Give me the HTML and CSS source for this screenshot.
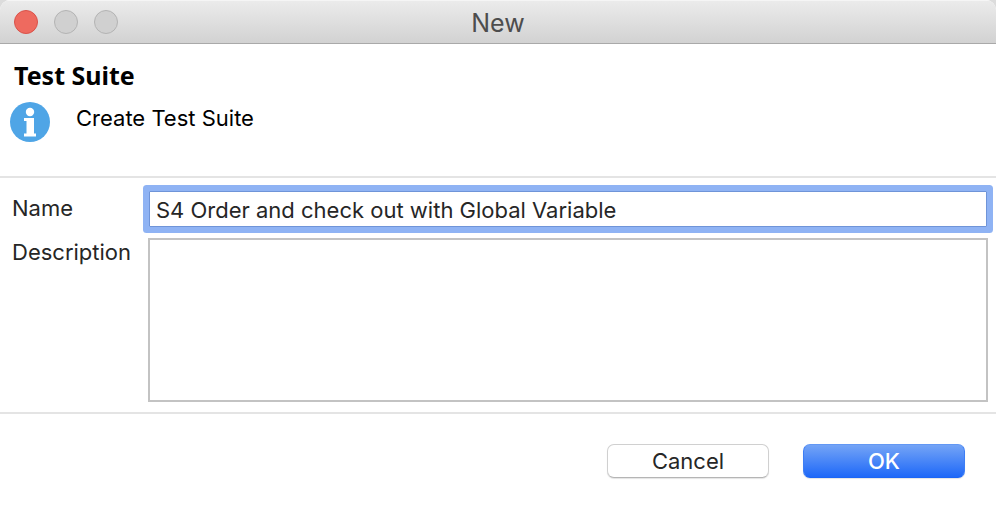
FILE: index.html
```html
<!DOCTYPE html>
<html lang="en">
<head>
<meta charset="utf-8">
<title>New</title>
<link rel="stylesheet" href="styles.css">
</head>
<body>
<form class="dialog">
  <header class="titlebar">
    <div class="controls">
      <button type="button" class="control close" aria-label="Close"></button>
      <button type="button" class="control" aria-label="Minimize" disabled></button>
      <button type="button" class="control" aria-label="Zoom" disabled></button>
    </div>
    <div class="caption">New</div>
  </header>
  <section class="banner">
    <h1 class="heading">Test Suite</h1>
    <div class="message">
      <svg class="info" viewBox="0 0 40 40" aria-hidden="true">
        <circle cx="20" cy="20" r="20" fill="#4fa5e6"/>
        <circle cx="20" cy="10" r="4.200" fill="#fff"/>
        <path d="M14 16h10v15.500h2v3H14v-3h2.500v-12.500H14z" fill="#fff"/>
      </svg>
      <p class="text">Create Test Suite</p>
    </div>
  </section>
  <section class="fields">
    <label class="label" for="name">Name</label>
    <input id="name" class="name" type="text" value="S4 Order and check out with Global Variable">
    <label class="label-top" for="description">Description</label>
    <textarea id="description" class="description"></textarea>
  </section>
  <footer class="actions">
    <button type="button" class="button">Cancel</button>
    <button type="submit" class="button primary">OK</button>
  </footer>
</form>
</body>
</html>
```
FILE: styles.css
```css
* {
  box-sizing: border-box;
}

html,
body {
  height: 100%;
  margin: 0;
}

body {
  background: #dcdcdc;
  color: #262626;
  font: 22px/28px Inter, "Liberation Sans", sans-serif;
}

.dialog {
  display: flex;
  flex-direction: column;
  min-height: 100%;
  overflow: hidden;
  border-radius: 10px 10px 0 0;
  background: #fff;
}

.titlebar {
  display: grid;
  grid-template-columns: 1fr auto 1fr;
  align-items: center;
  height: 44px;
  padding: 0 14px;
  border-top: 1px solid #f5f5f5;
  border-bottom: 1px solid #a9a9a9;
  background: linear-gradient(#ebebeb, #d2d2d2);
}

.controls {
  display: flex;
  gap: 16px;
}

.control {
  width: 24px;
  height: 24px;
  padding: 0;
  border: 1px solid #b3b3b3;
  border-radius: 50%;
  background: #d0d0d0;
}

.close {
  border-color: #d9524a;
  background: #ee6a5f;
}

.caption {
  padding-top: 2px;
  color: #4d4d4d;
  font-size: 25px;
}

.banner {
  height: 134px;
  padding: 15px 10px;
  border-bottom: 2px solid #e4e4e4;
  color: #000;
}

.heading {
  margin: 0 4px;
  font: bold 25px/32px "Noto Sans", sans-serif;
}

.message {
  display: flex;
  gap: 26px;
  margin-top: 11px;
}

.info {
  width: 40px;
  height: 40px;
}

.text {
  margin: 2px 0;
}

.fields {
  display: grid;
  flex: 1;
  grid-template-columns: 124px 1fr;
  grid-template-rows: auto 1fr;
  gap: 11px 12px;
  padding: 13px 8px 10px 12px;
}

.label {
  padding-top: 3px;
}

.name,
.description {
  width: 100%;
  margin: 0;
  border-radius: 0;
  outline: 0;
  background: #fff;
  color: inherit;
  font: inherit;
}

.name {
  justify-self: center;
  width: calc(100% - 2px);
  height: 36px;
  padding: 2px 6px 0;
  border: 1px solid #6f94d8;
  border-radius: 1px;
  box-shadow: 0 0 0 6px #8fb3f4;
}

.description {
  display: block;
  border: 2px solid #c3c3c3;
  resize: none;
}

.actions {
  display: flex;
  justify-content: flex-end;
  gap: 34px;
  height: 100px;
  padding: 30px 31px;
  border-top: 2px solid #e4e4e4;
}

.button {
  width: 162px;
  height: 34px;
  padding: 0;
  border: 1px solid #d0d0d0;
  border-bottom-color: #b5b5b5;
  border-radius: 7px;
  background: #fff;
  box-shadow: 0 1px 1px #e4e4e4;
  color: #262626;
  font: inherit;
}

.primary {
  border-color: #6398f4 #3d7ef5 #1b65f5;
  background: linear-gradient(#74a4f6, #1e68f8);
  color: #fff;
  font-weight: 500;
}
```
